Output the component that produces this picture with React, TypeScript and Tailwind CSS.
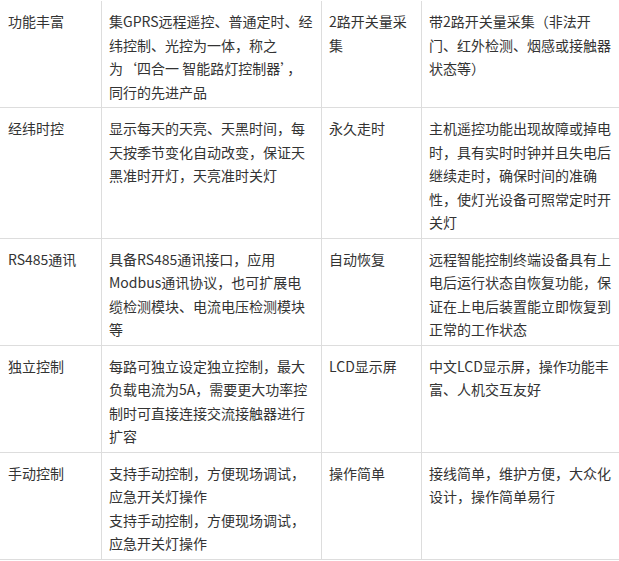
import React from "react";

const rows: string[][][] = [
  [
    ["功能丰富"],
    ["集GPRS远程遥控、普通定时、经", "纬控制、光控为一体，称之", "为‘四合一 智能路灯控制器’，", "同行的先进产品"],
    ["2路开关量采", "集"],
    ["带2路开关量采集（非法开", "门、红外检测、烟感或接触器", "状态等）"],
  ],
  [
    ["经纬时控"],
    ["显示每天的天亮、天黑时间，每", "天按季节变化自动改变，保证天", "黑准时开灯，天亮准时关灯"],
    ["永久走时"],
    ["主机遥控功能出现故障或掉电", "时，具有实时时钟并且失电后", "继续走时，确保时间的准确", "性，使灯光设备可照常定时开", "关灯"],
  ],
  [
    ["RS485通讯"],
    ["具备RS485通讯接口，应用", "Modbus通讯协议，也可扩展电", "缆检测模块、电流电压检测模块", "等"],
    ["自动恢复"],
    ["远程智能控制终端设备具有上", "电后运行状态自恢复功能，保", "证在上电后装置能立即恢复到", "正常的工作状态"],
  ],
  [
    ["独立控制"],
    ["每路可独立设定独立控制，最大", "负载电流为5A，需要更大功率控", "制时可直接连接交流接触器进行", "扩容"],
    ["LCD显示屏"],
    ["中文LCD显示屏，操作功能丰", "富、人机交互友好"],
  ],
  [
    ["手动控制"],
    ["支持手动控制，方便现场调试，", "应急开关灯操作", "支持手动控制，方便现场调试，", "应急开关灯操作"],
    ["操作简单"],
    ["接线简单，维护方便，大众化", "设计，操作简单易行"],
  ],
];

export default function App() {
  return (
    <div className="w-[619px] h-[561px] overflow-hidden bg-white">
      <div
        className="mt-[1px] grid grid-cols-[102px_220px_100px_210px] w-[632px] text-[14px] leading-[23.5px] text-[#333333]"
        style={{ fontFamily: '"Noto Sans CJK SC", "Noto Sans", sans-serif' }}
      >
        {rows.map((row, ri) =>
          row.map((cell, ci) => (
            <div
              key={`${ri}-${ci}`}
              className={`border-r border-b border-[#dddddd] pt-[9px] pb-[3px] pr-[6px] whitespace-nowrap ${
                ci === 0 ? "pl-[8px]" : "pl-[7px]"
              }`}
            >
              {cell.map((line, li) => (
                <div key={li}>{line}</div>
              ))}
            </div>
          ))
        )}
      </div>
    </div>
  );
}
